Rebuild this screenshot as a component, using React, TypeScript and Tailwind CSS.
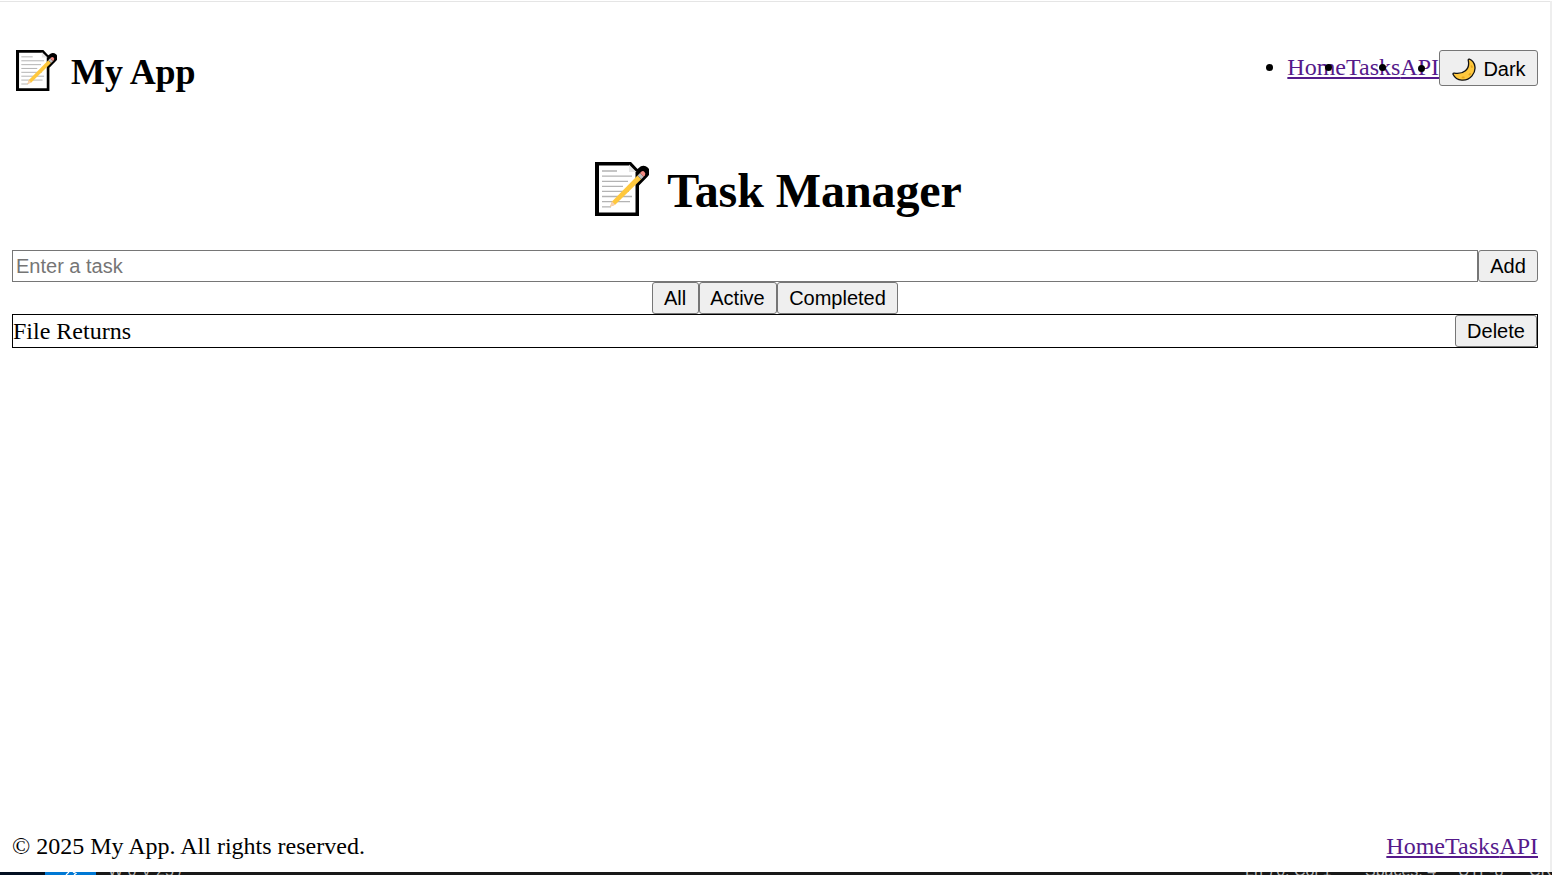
import React from "react";

function Memo({ className }: { className: string }) {
  return (
    <svg viewBox="0 0 54 54" className={className} aria-hidden="true">
      <path d="M0 0H36L42.5 7L44 5.8A6 6 0 0 1 53 14.2L44 23.5V54H0Z" fill="#000" />
      <path d="M4 3.5H34L40.5 10V50.5H4Z" fill="#fff" />
      <path d="M34 2.5V10H41.5Z" fill="#e6e6e6" />
      <path d="M7 9H22M7 14.2H37M7 19.3H33M7 24.3H28M7 29.4H34M7 34.5H37M7 39.6H35M7 44.8H16" stroke="#b3b3b3" strokeWidth="1.3" />
      <path d="M15 44.8L17 39.5 42.5 13.5 46.2 17.2 20.2 42.8Z" fill="#ffc83d" />
      <path d="M15 44.8L17 39.5 20.2 42.8Z" fill="#f7d0b5" />
      <path d="M42.5 13.5L45 11 48.7 14.7 46.2 17.2Z" fill="#bfbfbf" />
      <path d="M45 11L46.2 9.8Q48 8.4 49.5 9.9 51 11.4 49.9 13.3L48.7 14.7Z" fill="#f28b82" />
    </svg>
  );
}

function Moon() {
  return (
    <svg viewBox="0 0 24 24" className="h-6 w-6 shrink-0" aria-hidden="true">
      <path d="M17.4 1.2C23.5 3.8 25 12 20 17.8 14.5 24.2 4.5 23.4 1 16.2Q.9 15 2.4 15.2C11 16.6 18.5 11.5 16.2 2.2Q16.3.9 17.4 1.2Z" fill="#ffc83d" stroke="#111" strokeWidth="1.3" strokeLinejoin="round" />
      <path d="M19.6 8.2L19.9 9M17.4 16.6L18.2 15.8M10.5 19.4H11.8" stroke="#e5a51d" strokeWidth="1.8" strokeLinecap="round" />
    </svg>
  );
}

function Button({ children, className = "" }: { children: React.ReactNode; className?: string }) {
  return (
    <button className={`flex shrink-0 items-center justify-center rounded-[3px] border border-[#767676] bg-[#efefef] font-['Liberation_Sans',sans-serif] text-[20px] leading-[23px] text-black ${className}`}>
      {children}
    </button>
  );
}

function Links() {
  return (
    <>
      <a href="#home" className="text-[#551a8b] underline">Home</a>
      <a href="#tasks" className="text-[#551a8b] underline">Tasks</a>
      <a href="#api" className="text-[#551a8b] underline">API</a>
    </>
  );
}

function Bullet({ className }: { className: string }) {
  return <span className={`absolute size-[7px] rounded-full bg-black ${className}`} />;
}

export default function App() {
  return (
    <div className="flex h-[875px] w-full flex-col overflow-hidden bg-white font-['Liberation_Serif',serif] text-[24px] leading-[27px] text-black">
      <div className="flex h-[872px] shrink-0 border-t border-white">
        <div className="flex min-w-0 flex-1 flex-col border-t border-[#e5e5e5] pr-3 pl-3">
          <header className="flex h-[138px] items-start justify-between pt-12">
            <h2 className="flex items-start pl-1 text-[36px] leading-[42px] font-bold tracking-[-0.1px]">
              <Memo className="mr-[14px] h-[41px] w-[41px]" />
              <span className="pt-px">My App</span>
            </h2>
            <nav className="flex items-start">
              <div className="relative flex pt-1">
                <Links />
                <Bullet className="top-[14px] -left-[21px]" />
                <Bullet className="top-[14px] left-[38px]" />
                <Bullet className="top-[14px] left-[92px]" />
                <Bullet className="top-[15px] left-[131px]" />
              </div>
              <Button className="h-9 w-[99px] gap-[7px] pt-[3px] pl-px">
                <Moon />
                Dark
              </Button>
            </nav>
          </header>
          <main className="flex flex-col">
            <h1 className="flex h-[110px] items-start justify-center pt-[22px] pl-[7px] text-[48px] leading-[56px] font-bold tracking-[-0.08px]">
              <Memo className="mr-[18px] h-[54px] w-[54px]" />
              <span className="pt-px">Task Manager</span>
            </h1>
            <div className="flex h-8">
              <input placeholder="Enter a task" className="min-w-0 flex-1 border border-[#767676] bg-white px-[3px] font-['Liberation_Sans',sans-serif] text-[20px] placeholder:text-[#757575]" />
              <Button className="w-[60px]">Add</Button>
            </div>
            <div className="flex h-8 justify-center">
              <Button className="w-[47px] pr-px">All</Button>
              <Button className="w-[78px] pr-px">Active</Button>
              <Button className="w-[121px]">Completed</Button>
            </div>
            <div className="flex h-[34px] items-center justify-between border border-black">
              <span>File Returns</span>
              <Button className="h-8 w-[82px]">Delete</Button>
            </div>
          </main>
          <footer className="mt-auto flex justify-between pb-3">
            <p>© 2025 My App. All rights reserved.</p>
            <nav className="flex"><Links /></nav>
          </footer>
        </div>
        <div className="w-0.5 bg-[#eeeeee]" />
      </div>
      <div className="flex h-[3px] shrink-0 overflow-hidden bg-[#181818] font-['Liberation_Sans',sans-serif] text-[16px] leading-4 whitespace-nowrap text-[#b5b5b5]">
        <div className="w-[45px] shrink-0 bg-[#020f20]" />
        <div className="flex w-[51px] shrink-0 justify-center bg-[#0078d4] text-white">
          <svg viewBox="0 0 12 3" className="h-[3px] w-3" fill="none" stroke="currentColor" strokeWidth="1.2" aria-hidden="true">
            <path d="M1 3L4 0M8 0L11 1.5 9 3" />
          </svg>
        </div>
        <span className="-mt-[9px] ml-3 w-[1137px] shrink-0">W 0 V 25 /</span>
        <span className="-mt-[9px] w-[120px] shrink-0">Ln 70, Col 1</span>
        <span className="-mt-[9px] w-[93px] shrink-0">Spaces: 4</span>
        <span className="-mt-[9px] w-[71px] shrink-0">UTF-8</span>
        <span className="-mt-[9px] shrink-0">CRLF</span>
      </div>
    </div>
  );
}
